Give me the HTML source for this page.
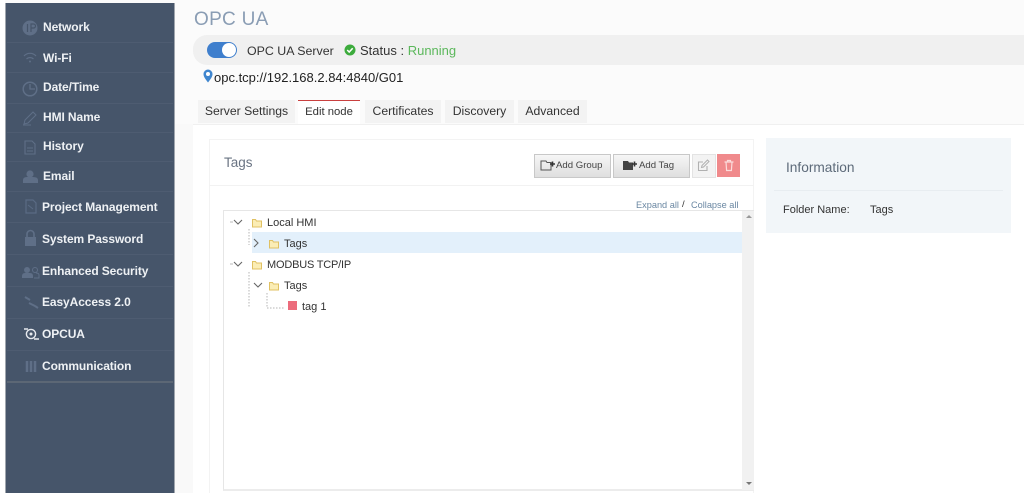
<!DOCTYPE html>
<html><head><meta charset="utf-8">
<style>
html,body{margin:0;padding:0;background:#fff;}
body{width:1024px;height:493px;position:relative;overflow:hidden;font-family:"Liberation Sans",sans-serif;color:#333;filter:blur(.3px);}
.a{position:absolute;white-space:nowrap;}
.n{position:absolute;left:43px;color:#eef1f4;font-size:12px;font-weight:bold;white-space:nowrap;line-height:16px;letter-spacing:-.1px;}
.l{position:absolute;left:7px;width:166px;height:1px;background:#4e5c71;}
.t{position:absolute;top:100px;height:23px;background:#f3f3f3;font-size:12.2px;line-height:22px;text-align:center;color:#333;}
.b{position:absolute;top:154px;height:22px;border:1px solid #c8c8c8;background:linear-gradient(#f6f6f6,#dedede);font-size:9.6px;line-height:22px;color:#444;}
svg{position:absolute;}
</style></head><body>
<div class="a" style="left:0;top:0;width:1024px;height:124px;background:#fbfbfb"></div>
<div class="a" style="left:175px;top:124px;width:18px;height:369px;background:#f9f9f9"></div>
<div class="a" style="left:0;top:0;width:5px;height:493px;background:#fff"></div>
<div class="a" style="left:5px;top:3px;width:170px;height:490px;background:#46556a;border-left:1px solid #a0a6ae;border-right:1px solid #a0a6ae;box-sizing:border-box"></div>

<div class="n" style="top:19px">Network</div>
<div class="n" style="top:50px">Wi-Fi</div>
<div class="n" style="top:79px">Date/Time</div>
<div class="n" style="top:109px">HMI Name</div>
<div class="n" style="top:138px">History</div>
<div class="n" style="top:168px">Email</div>
<div class="n" style="top:199px;left:42px">Project Management</div>
<div class="n" style="top:231px;left:42px">System Password</div>
<div class="n" style="top:263px;left:42px">Enhanced Security</div>
<div class="n" style="top:294px;left:42px">EasyAccess 2.0</div>
<div class="n" style="top:326px;left:42px">OPCUA</div>
<div class="n" style="top:358px;left:42px">Communication</div>
<div class="l" style="top:42px"></div><div class="l" style="top:72px"></div><div class="l" style="top:103px"></div><div class="l" style="top:132px"></div><div class="l" style="top:161px"></div><div class="l" style="top:191px"></div><div class="l" style="top:222px"></div><div class="l" style="top:254px"></div><div class="l" style="top:286px"></div><div class="l" style="top:318px"></div><div class="l" style="top:350px"></div>
<div class="l" style="top:381px;height:2px;background:#5c6775"></div>

<svg style="left:20px;top:18px" width="22" height="360" viewBox="0 0 22 360" fill="none">
<circle cx="10" cy="10" r="7.5" fill="#5f6f87"/><path d="M7.500 6v8M11 14V6h2.500a2 2 0 0 1 0 4H11" stroke="#46556a" stroke-width="1.200"/>
<path d="M4 38a8 8 0 0 1 12 0M6.500 41a5 5 0 0 1 7 0" stroke="#5f6f87" stroke-width="1.200"/><circle cx="10" cy="43.500" r="1" fill="#5f6f87"/>
<circle cx="10" cy="71" r="6.800" stroke="#5f6f87" stroke-width="1.500"/><path d="M10 66v5h5" stroke="#5f6f87" stroke-width="1.300"/>
<path d="M4 106l1-4 8-8 3 3-8 8zM3 107h8" stroke="#5f6f87" stroke-width="1"/>
<path d="M5 123h7l3 3v10H5z" stroke="#5f6f87" stroke-width="1.100"/><path d="M7 130h6M7 133h6" stroke="#5f6f87"/>
<circle cx="10" cy="156" r="3.600" fill="#5f6f87"/><path d="M3 165v-3q0-3 4-3h6q5 0 5 3v3z" fill="#5f6f87"/>
<path d="M6 182h7l3 3v10H6z" stroke="#5a6b84" stroke-width="1.200"/><path d="M8 187l5 4" stroke="#5a6b84"/>
<rect x="5" y="219" width="11" height="9" fill="#5f6f87"/><path d="M7 219v-3a3.500 3.500 0 0 1 7 0v3" stroke="#5f6f87" stroke-width="1.600"/>
<circle cx="7" cy="252" r="3" fill="#5f6f87"/><path d="M2 260v-2q0-3 3-3h5q3 0 3 3v2z" fill="#5f6f87"/><circle cx="15" cy="252" r="2.500" stroke="#5f6f87"/><path d="M14 260h5v-3q0-2-3-2" stroke="#5f6f87"/>
<path d="M5 279l5 3M9 285l6 3M15 288l3 2" stroke="#5f6f87" stroke-width="2"/>
<path d="M4 311h4M14 321h5" stroke="#e6e9ee" stroke-width="1.400"/><circle cx="11" cy="316" r="4.600" stroke="#e6e9ee" stroke-width="1.400"/><circle cx="11" cy="316" r="1.500" fill="#e6e9ee"/>
<path d="M7 343v11M11 343v11M15 343v11" stroke="#5f6f87" stroke-width="2.500"/>
</svg>

<div class="a" style="left:194px;top:8px;font-size:19px;line-height:24px;color:#8a9db4;letter-spacing:.3px">OPC UA</div>
<div class="a" style="left:193px;top:35px;width:831px;height:30px;background:#f0f0f0;border-radius:14px 0 0 14px"></div>
<div class="a" style="left:207px;top:42px;width:30px;height:16px;border-radius:8px;background:#3f7fcd"></div>
<div class="a" style="left:222px;top:43px;width:14px;height:14px;border-radius:50%;background:#fff"></div>
<div class="a" style="left:247px;top:43px;font-size:12.400px;line-height:16px;color:#333">OPC UA Server</div>
<svg style="left:344px;top:44px" width="12" height="12" viewBox="0 0 12 12"><circle cx="6" cy="6" r="5.500" fill="#3cab3c"/><path d="M3.200 6l2 2 3.500-3.800" stroke="#fff" stroke-width="1.500" fill="none"/></svg>
<div class="a" style="left:360px;top:43px;font-size:13px;line-height:16px;color:#333">Status : <span style="color:#5cb85c">Running</span></div>
<svg style="left:203px;top:69px" width="10" height="14" viewBox="0 0 10 14"><path d="M5 13.500C2 9.500.5 7.500.5 5a4.500 4.500 0 0 1 9 0c0 2.500-1.500 4.500-4.500 8.500z" fill="#3f86cf"/><circle cx="5" cy="5" r="2" fill="#fff"/></svg>
<div class="a" style="left:214px;top:70px;font-size:13px;line-height:16px;color:#222">opc.tcp://192.168.2.84:4840/G01</div>

<div class="a" style="left:193px;top:124px;width:831px;height:1px;background:#f0f0f0"></div>
<div class="t" style="left:198px;width:97px">Server Settings</div>
<div class="t" style="left:298px;width:62px;top:100px;height:24px;background:#fff;border-top:1px solid #c9403f;box-sizing:border-box;font-size:11.300px;line-height:23px">Edit node</div>
<div class="t" style="left:365px;width:76px">Certificates</div>
<div class="t" style="left:445px;width:69px">Discovery</div>
<div class="t" style="left:518px;width:69px">Advanced</div>

<div class="a" style="left:209px;top:139px;width:545px;height:354px;border:1px solid #f3f3f3;border-bottom:0;box-sizing:border-box"></div>
<div class="a" style="left:209px;top:185px;width:545px;height:1px;background:#f2f2f2"></div>
<div class="a" style="left:224px;top:154px;font-size:13.500px;line-height:17px;color:#6a7483">Tags</div>

<div class="b" style="left:534px;width:75px"><span style="position:absolute;left:21px">Add Group</span></div>
<svg style="left:540px;top:159px" width="16" height="13" viewBox="0 0 16 13" fill="none"><path d="M1 2h5l1 1.500h4V11H1z" stroke="#555"/><path d="M10 5h5M12.500 2.500v5" stroke="#333" stroke-width="1.600"/></svg>
<div class="b" style="left:613px;width:75px"><span style="position:absolute;left:25px">Add Tag</span></div>
<svg style="left:622px;top:159px" width="16" height="13" viewBox="0 0 16 13"><path d="M1 2h5l1 1.500h4V11H1z" fill="#444"/><path d="M10 5h5M12.500 2.500v5" stroke="#333" stroke-width="1.600"/></svg>
<div class="a" style="left:692px;top:154px;width:22px;height:22px;background:#f3f3f3;border:1px solid #e3e3e3"></div>
<svg style="left:697px;top:159px" width="13" height="13" viewBox="0 0 13 13" fill="none"><path d="M10 7v4.500H1.500V3H6" stroke="#b0b0b0" stroke-width="1.100"/><path d="M4.500 8.500l.5-2L10.500 1l1.500 1.500L6.500 8z" stroke="#b0b0b0"/></svg>
<div class="a" style="left:717px;top:154px;width:23px;height:23px;background:#f08a8c"></div>
<svg style="left:723px;top:159px" width="12" height="13" viewBox="0 0 12 13" fill="none"><path d="M1.500 3h9M4.500 3V1.500h3V3M3 3l.6 8.500h4.800L9 3" stroke="#fbdcdc" stroke-width="1.200"/></svg>

<div class="a" style="left:636px;top:199px;font-size:9.200px;line-height:12px;color:#6a87a2">Expand all</div>
<div class="a" style="left:682px;top:199px;font-size:9.500px;line-height:12px;color:#333">/</div>
<div class="a" style="left:691px;top:199px;font-size:9.200px;line-height:12px;color:#6a87a2">Collapse all</div>

<div class="a" style="left:223px;top:210px;width:531px;height:281px;border:1px solid #e6e6e6;border-right:0;border-bottom:2px solid #ececec;box-sizing:border-box"></div>
<div class="a" style="left:742px;top:211px;width:12px;height:279px;background:#f1f1f1"></div>
<div class="a" style="left:746px;top:215px;width:0;height:0;border:3px solid transparent;border-bottom:3px solid #999;border-top:0"></div>
<div class="a" style="left:746px;top:482px;width:0;height:0;border:3px solid transparent;border-top:3px solid #777;border-bottom:0"></div>
<div class="a" style="left:252px;top:232px;width:490px;height:21px;background:#e3f0fb"></div>

<svg style="left:225px;top:212px" width="110" height="110" viewBox="0 0 110 110" fill="none">
<path d="M5 10h3M5 52h3" stroke="#bbb"/>
<path d="M9 8l4 4 4-4M9 50l4 4 4-4M29 71l4 4 4-4" stroke="#666" stroke-width="1.100"/>
<path d="M24 17v16M24 60v35M42 81v15h17" stroke="#b5b5b5" stroke-dasharray="1.500 1.500"/>
<path d="M29 27l4 4-4 4" stroke="#666" stroke-width="1.100"/>
<g stroke="#e0c163" fill="#fbedb5"><path d="M27.500 7.500h3l1 1.500h5v6h-9z"/><path d="M44.500 28.500h3l1 1.500h5v6h-9z"/><path d="M27.500 49.500h3l1 1.500h5v6h-9z"/><path d="M44.500 70.500h3l1 1.500h5v6h-9z"/></g>
<rect x="63" y="89" width="9" height="9" fill="#ec6c7c"/>
</svg>
<div class="a" style="left:267px;top:215px;font-size:11px;line-height:16px;color:#333">Local HMI</div>
<div class="a" style="left:284px;top:236px;font-size:11px;line-height:16px;color:#333">Tags</div>
<div class="a" style="left:267px;top:257px;font-size:11px;line-height:16px;color:#333;letter-spacing:-.2px">MODBUS TCP/IP</div>
<div class="a" style="left:284px;top:278px;font-size:11px;line-height:16px;color:#333">Tags</div>
<div class="a" style="left:302px;top:299px;font-size:11px;line-height:16px;color:#333">tag 1</div>

<div class="a" style="left:766px;top:138px;width:245px;height:95px;background:#f2f6f9"></div>
<div class="a" style="left:786px;top:159px;font-size:13.700px;line-height:17px;color:#5d6a79">Information</div>
<div class="a" style="left:774px;top:190px;width:229px;height:1px;background:#e8edf1"></div>
<div class="a" style="left:783px;top:202px;font-size:11px;line-height:16px;color:#333">Folder Name:</div>
<div class="a" style="left:870px;top:202px;font-size:11px;line-height:16px;color:#333">Tags</div>
</body></html>
